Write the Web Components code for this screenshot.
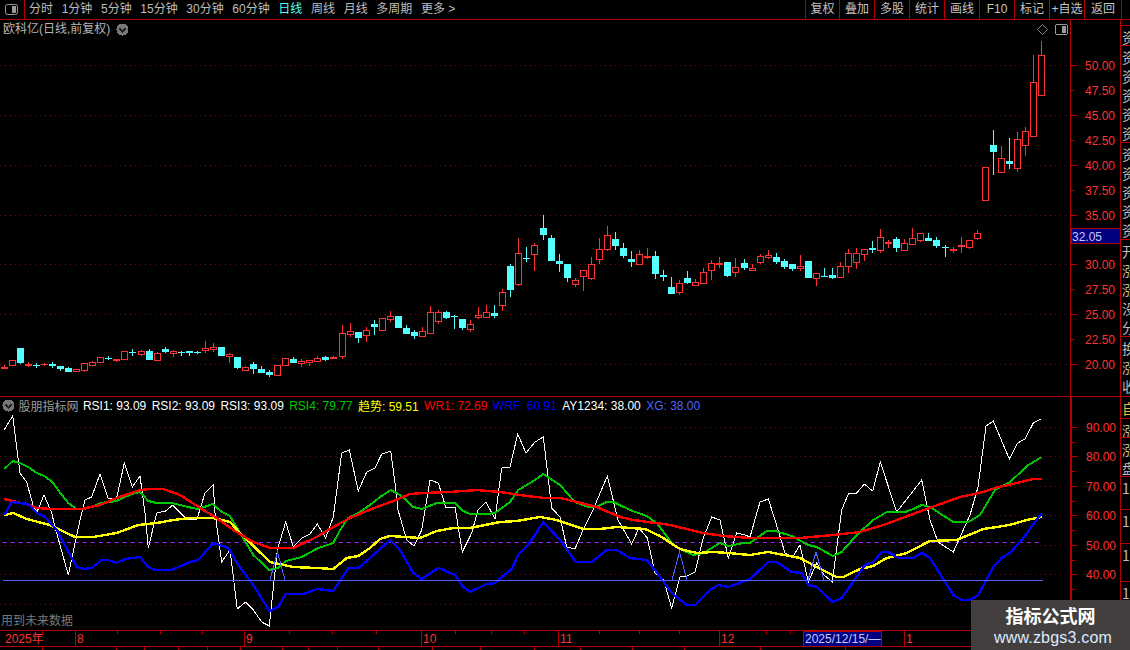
<!DOCTYPE html>
<html lang="zh">
<head>
<meta charset="utf-8">
<title>欧科亿</title>
<style>
html, body { margin: 0; height: 100%; background: #000; overflow: hidden; }
body { font: 12px "Liberation Sans", "Noto Sans CJK SC", sans-serif; color: #c0c0c0; }
</style>
</head>
<body>
<tdx-terminal>
  <tool-bar slot="toolbar">
    <tool-tab>分时</tool-tab><tool-tab>1分钟</tool-tab><tool-tab>5分钟</tool-tab><tool-tab>15分钟</tool-tab>
    <tool-tab>30分钟</tool-tab><tool-tab>60分钟</tool-tab><tool-tab active>日线</tool-tab><tool-tab>周线</tool-tab>
    <tool-tab>月线</tool-tab><tool-tab>多周期</tool-tab><tool-tab>更多 &gt;</tool-tab>
    <tool-button slot="right">复权</tool-button><tool-button slot="right">叠加</tool-button><tool-button slot="right">多股</tool-button>
    <tool-button slot="right">统计</tool-button><tool-button slot="right">画线</tool-button><tool-button slot="right">F10</tool-button>
    <tool-button slot="right">标记</tool-button><tool-button slot="right">+自选</tool-button><tool-button slot="right" wide>返回</tool-button>
  </tool-bar>

  <candle-panel slot="main">欧科亿(日线,前复权)</candle-panel>
  <price-axis slot="main-axis"></price-axis>

  <indicator-panel slot="sub">
    <span slot="title">股朋指标网</span>
    <legend-item color="#fff">RSI1: 93.09</legend-item>
    <legend-item color="#fff">RSI2: 93.09</legend-item>
    <legend-item color="#fff">RSI3: 93.09</legend-item>
    <legend-item color="#00c800">RSI4: 79.77</legend-item>
    <legend-item color="#ff0">趋势: 59.51</legend-item>
    <legend-item color="#f00">WR1: 72.69</legend-item>
    <legend-item color="#00f">WRF: 60.91</legend-item>
    <legend-item color="#fff">AY1234: 38.00</legend-item>
    <legend-item color="#4b64ff">XG: 38.00</legend-item>
  </indicator-panel>
  <value-axis slot="sub-axis"></value-axis>
  <time-axis slot="time"></time-axis>

  <side-strip slot="side">
    <side-tab h="6"></side-tab>
    <side-tab h="20">资</side-tab>
    <side-tab h="97">资资资资资</side-tab>
    <side-tab h="97">资资资资资</side-tab>
    <side-tab h="97">开涨涨没分</side-tab>
    <side-tab h="60">换涨收</side-tab>
    <side-tab h="22" color="#e0c040">自</side-tab>
    <side-tab h="19">涨</side-tab>
    <side-tab h="39">涨盘</side-tab>
    <side-tab h="33">1</side-tab>
    <side-tab h="34">1</side-tab>
    <side-tab h="38">1</side-tab>
    <side-tab h="40">1</side-tab>
  </side-strip>

  <water-mark slot="overlay"></water-mark>
</tdx-terminal>

<script>
const RED = "#b40000";
const DOT = "#800000";
const AXIS_TEXT = "#ff3232";

// 右上と左上の小さいアイコン
const panelIcon = `<svg width="13" height="11" viewBox="0 0 13 11"><rect x=".5" y=".5" width="12" height="10" rx="2" fill="none" stroke="#9a9a9a"/><rect x="7" y="2" width="4" height="7" fill="#9a9a9a"/></svg>`;
const chevron = `<svg width="13" height="13" viewBox="0 0 13 13"><circle cx="6.5" cy="6.5" r="6" fill="#777"/><path d="M3.5 5.5l3 3 3-3" fill="none" stroke="#222" stroke-width="1.5"/></svg>`;

class TdxTerminal extends HTMLElement {
  constructor() {
    super();
    this.attachShadow({ mode: "open" });
    this.shadowRoot.innerHTML = `
      <style>
      :host { display: grid; position: relative; width: 1130px; height: 650px; overflow: hidden;
        grid-template-columns: 1070px 51px 9px; grid-template-rows: 20px 377px 234px 19px; }
      .top { grid-column: 1 / 4; }
      .time { grid-column: 1 / 3; }
      .side { grid-column: 3; grid-row: 2 / 5; }
      </style>
      <div class="top"><slot name="toolbar"></slot></div>
      <slot name="main"></slot><slot name="main-axis"></slot>
      <div class="side"><slot name="side"></slot></div>
      <slot name="sub"></slot><slot name="sub-axis"></slot>
      <div class="time"><slot name="time"></slot></div>
      <slot name="overlay"></slot>`;
  }
}

class ToolBar extends HTMLElement {
  constructor() {
    super();
    this.attachShadow({ mode: "open" });
    this.shadowRoot.innerHTML = `
      <style>
      :host { display: flex; height: 20px; box-sizing: border-box; border-bottom: 1px solid ${RED}; }
      .icon { width: 23px; border-right: 1px solid ${RED}; display: flex; align-items: center; justify-content: center; padding-right: 1px; box-sizing: content-box; }
      .tabs { display: flex; gap: 8.65px; padding-left: 4px; align-items: center; flex: 1; }
      .right { display: flex; border-right: 1px solid ${RED}; margin-right: 8px; }
      </style>
      <div class="icon">${panelIcon}</div>
      <div class="tabs"><slot></slot></div>
      <div class="right"><slot name="right"></slot></div>`;
  }
}

class ToolTab extends HTMLElement {
  constructor() {
    super();
    this.attachShadow({ mode: "open" });
    this.shadowRoot.innerHTML = `
      <style>
      :host { display: block; color: #bdbdbd; line-height: 19px; white-space: nowrap; }
      :host([active]) { color: #54ffff; }
      </style><slot></slot>`;
  }
}

class ToolButton extends HTMLElement {
  constructor() {
    super();
    this.attachShadow({ mode: "open" });
    this.shadowRoot.innerHTML = `
      <style>
      :host { display: block; width: 35px; box-sizing: border-box; border-left: 1px solid ${RED}; color: #c4c4c4;
        line-height: 19px; text-align: center; white-space: nowrap; }
      :host(:first-of-type) { width: 34px; }
      :host([wide]) { width: 37px; }
      </style><slot></slot>`;
  }
}

// チャート共通: ページ座標をそのまま viewBox に使う
function svgBox(x, y, w, h, inner) {
  return `<svg xmlns="http://www.w3.org/2000/svg" width="${w}" height="${h}" viewBox="${x} ${y} ${w} ${h}" style="display:block">${inner}</svg>`;
}
function dotted(y, x1 = 0, x2 = 1068) {
  return `<line x1="${x1}" x2="${x2}" y1="${y + 0.5}" y2="${y + 0.5}" stroke="${DOT}" stroke-dasharray="1 4"/>`;
}

// 足データ: [種類, ひげ上, 実体上, 実体下, ひげ下] 値はズーム画像の座標 (r=中抜き赤 R=塗り赤 c=水色)
const CANDLES = [
  [300, [["R",195,201,206,207],["r",181,181,197,197],["c",144,144,189,192],["R",186,192,197,202],["c",190,194,197,204],["R",188,191,195,198],
    ["c",186,192,198,204],["c",198,198,207,213],["c",201,204,216,216],["r",208,208,215,215],["r",190,190,212,215],["r",183,187,197,197],
    ["r",172,172,188,188],["c",168,173,176,180],["R",178,178,182,186],["r",154,154,179,179],["c",148,156,159,168],["r",150,154,164,167],
    ["c",148,153,180,180],["r",157,160,182,182],["c",141,147,156,159],["r",151,154,161,171],["c",153,155,158,168],["c",153,153,159,168],
    ["c",153,156,158,162],["r",123,145,152,159],["r",129,142,149,156],["c",141,141,168,168],["r",160,163,170,190],["c",171,171,204,207],
    ["r",198,202,212,212],["c",186,193,207,222],["c",198,207,219,219],["c",210,216,225,231],["r",196,196,227,227],["r",175,175,197,197],
    ["c",171,177,189,189],["r",178,184,193,201],["r",181,181,188,198],["r",168,175,185,185],["c",168,171,180,183],["r",168,172,178,178]]],
  [200, [["r",375,400,470,477],["r",369,394,404,411],["c",396,396,414,429],["r",381,391,407,426],["c",360,372,381,405],["r",355,355,392,392],
    ["r",333,349,359,365],["c",348,348,384,384],["c",375,384,402,402],["c",390,396,408,417],["r",381,394,410,410],["r",318,337,401,401],
    ["r",330,337,365,372],["c",333,336,354,357],["c",345,348,351,387],["c",357,357,384,390],["r",360,373,389,396],["r",321,346,353,357],
    ["r",315,337,353,353],["c",315,339,348,354],["r",267,277,317,333],["c",192,198,270,291],["r",114,160,254,258],["c",141,174,177,186],
    ["r",129,136,164,213],["c",45,84,105,120],["c",105,114,183,183],["c",162,183,192,216],["c",192,192,234,246],["r",234,241,254,261],
    ["r",211,211,230,273],["r",171,193,236,240],["r",114,148,179,192],["r",78,106,149,153],["c",96,117,138,150],["c",129,144,168,174],
    ["c",153,177,186,201],["r",150,163,194,194],["R",144,168,174,177],["c",153,168,222,237],["c",210,225,231,243],["c",231,261,282,282],
    ["r",240,250,278,285],["c",213,234,249,252]]],
  [200, [["r",237,247,257,257],["r",205,217,251,251],["r",181,190,212,240],["r",171,190,196,204],["c",186,186,228,231],["r",174,202,220,231],
    ["c",178,189,204,210],["r",192,205,212,212],["r",162,169,188,191],["r",150,166,174,177],["c",159,171,186,192],["c",177,183,201,207],
    ["c",192,192,207,213],["r",165,199,206,213],["c",183,183,234,234],["r",220,220,236,258],["c",204,228,231,231],["c",204,225,234,237],
    ["r",186,199,234,234],["r",147,160,200,219],["r",144,160,189,207],["r",148,148,164,183],["c",123,144,150,159],["r",87,112,153,159],
    ["R",120,125,132,144],["c",111,117,144,156],["r",117,130,152,152],["r",84,115,134,134],["r",100,100,123,126],["c",99,114,123,123],
    ["c",111,120,138,144],["c",135,141,144,171],["r",141,147,151,159],["r",111,135,138,159],["r",121,121,144,147],["r",90,100,117,120]]],
  [30, [["r",412,412,512,512],["c",300,345,366,435],["r",348,385,428,428],["c",324,393,402,417],["r",306,328,416,426],["r",292,304,347,378],
    ["r",75,157,320,320],["r",33,76,197,197]]],
];

function candlesSvg() {
  let i = 0, out = "";
  for (const [base, list] of CANDLES) {
    for (const [t, wt, top, bot, wb] of list) {
      const cx = Math.floor(4.33 + 8.04 * i++);
      const y = (v) => Math.round(base + v / 3);
      const col = t === "c" ? "#54ffff" : "#ff3232";
      out += `<line x1="${cx + 0.5}" x2="${cx + 0.5}" y1="${y(wt)}" y2="${y(wb)}" stroke="${col}"/>`;
      const h = Math.max(y(bot) - y(top), 1);
      if (t === "r") {
        out += `<rect x="${cx - 2.5}" y="${y(top) + 0.5}" width="6" height="${h - 1 > 0 ? h - 1 : 1}" fill="#000" stroke="${col}"/>`;
      } else {
        out += `<rect x="${cx - 3}" y="${y(top)}" width="7" height="${h}" fill="${col}"/>`;
      }
    }
  }
  return out;
}

class CandlePanel extends HTMLElement {
  constructor() {
    super();
    this.attachShadow({ mode: "open" });
    const grid = [65, 115, 165, 215, 264, 314, 364].map((y) => dotted(y)).join("");
    const diamond = `<path d="M1042.5 24.5l5 5-5 5-5-5z" fill="none" stroke="#808080" shape-rendering="auto"/>`;
    this.shadowRoot.innerHTML = `
      <style>
      :host { display: block; position: relative; height: 377px; box-sizing: border-box; border-bottom: 1px solid ${RED}; }
      .title { position: absolute; left: 3px; top: 1px; display: flex; align-items: center; gap: 6px; line-height: 17px; color: #b4b4b4; }
      .pin { position: absolute; left: 1055px; top: 4px; line-height: 0; }
      svg { shape-rendering: crispEdges; }
      </style>
      ${svgBox(0, 20, 1070, 376, grid + candlesSvg() + diamond)}
      <div class="title"><slot></slot>${chevron}</div>
      <div class="pin">${panelIcon}</div>`;
  }
}

class PriceAxis extends HTMLElement {
  constructor() {
    super();
    this.attachShadow({ mode: "open" });
    const rows = [[65,"50.00"],[90,"47.50"],[115,"45.00"],[140,"42.50"],[165,"40.00"],[190,"37.50"],[215,"35.00"],[264,"30.00"],[289,"27.50"],[314,"25.00"],[339,"22.50"],[364,"20.00"]];
    let s = "";
    for (const [y, v] of rows) {
      const major = Math.round(parseFloat(v) * 100) % 500 === 0;
      s += `<line x1="1071" x2="${major ? 1077 : 1074}" y1="${y + 0.5}" y2="${y + 0.5}" stroke="${RED}"/>`;
      s += `<text x="1085" y="${y + 5}" fill="${AXIS_TEXT}">${v}</text>`;
    }
    s += `<rect x="1071.5" y="228.5" width="49" height="15" fill="#000080" stroke="${RED}"/>`;
    s += `<text x="1072" y="241" fill="#c8c8ff">32.05</text>`;
    this.shadowRoot.innerHTML = `
      <style>
      :host { display: block; height: 377px; box-sizing: border-box; border-left: 1px solid ${RED}; border-right: 1px solid ${RED}; border-bottom: 1px solid ${RED}; overflow: hidden; }
      svg { shape-rendering: crispEdges; font: 12px "Liberation Sans", sans-serif; }
      </style>${svgBox(1071, 20, 49, 376, s)}`;
  }
}

const LINE_WHITE = "4,430 12.7,416 20,473 26.7,482 33,505 37,512 44,495 51.7,513 55,527 68.3,575 80,520 85,500 91.7,497 100,474 108,498 116.7,498 124.3,463 132.3,487 140,476 145,513 148.3,548 156.7,513 165.7,511 172.7,505 186.7,519 196.7,520 205,493 213.3,485 215,513 221.7,562 230,550 237.3,609 245.7,602 253.3,610 261.7,622 269.3,626 277.3,550 285.7,522 293.3,547 301.7,538 310,534 317.3,524 325.7,538 333.3,517 341.7,453 349.3,450 358.3,491 366.7,472 375,468 381.7,454 390.7,451 395,483 398,510 406.7,540 414,546 421.7,530 430,480 438.3,483 446,508 455,507 462.3,552 471.7,533 478,510 486,502 495,519 501.7,468 510,467 517.7,434 526,453 535,442 543.3,437 551.7,508 560,517 566.7,547 575,549 583,530 591.7,513 607.3,476 618,520 631.7,544 639,528 647.3,538 655,573 663.3,579 671.7,608 680,577 687.3,576 695,572 703.3,538 711.7,517 720,520 728.3,558 736.7,533 745,535 750,537 760,502 768.3,499 775,520 785,553 792.7,557 800,545 808.3,582 816.7,563 824,575 832.3,582 841.7,510 848.3,494 856.7,493 864.3,484 872.7,491 880.3,462 896.7,512 921.7,480 930,520 938,542 953.3,552 970,515 978,487 986,426 993.3,421 1009.3,459 1017.7,443 1025,439 1033.3,423 1041,419";
const LINE_GREEN = "4.3,469 12.7,461 20,463 28.3,467 36.7,473 44.3,476 52.3,482 60.3,493 68.3,503 76.3,509 84.3,509 92.3,507 100,503 116.7,501 125,497 132.3,494 140,492 148.3,501 156.7,503 172.3,503 188.3,507 196.7,509 204.3,507 212.7,504 221.7,512 230,516 240,533 253.3,555 269.3,570 278.3,568 285.7,561 301.7,557 318.3,548 333.3,543 340,530 348.3,518 358.3,513 370,505 380,497 390.7,490 398.3,494 404.3,498 413.3,507 421.7,509 436.7,503 455,503 463.3,511 470,514 486.7,514 495,513 510,502 518.3,490 535,480 543.3,474 560,485 575,502 588.3,507 596.7,507 606.7,502 613.3,502 630,510 646.7,516 656.7,523 671.7,543 680,549 693.3,555 703.3,553 720,543 728.3,546 743.3,543 750,543 766.7,531 775,531 791.7,536 808.3,545 816.7,547 832.7,556 841.7,552 856.7,535 873.3,520 886.7,512 905,512 913.3,509 921.7,505 930,507 953.3,522 968.3,522 980,515 995,490 1010,482 1028.3,465 1041.7,457";
const LINE_YELLOW = "4.3,515 13.3,513 26.7,519 50,525 75,537 93.3,537 116.7,533 138.3,525 156.7,523 173.3,520 190,518 213.3,518 230,522 240,533 270,562 293.3,567 316.7,568 333.3,569 346.7,558 358.3,556 370,548 380,539 390,536 420,538 436.7,531 453.3,528 470,528 500,522 516.7,521 540,517 556.7,520 583.3,529 600,529 616.7,527 645,529 660,536 680,549 696.7,553 713.3,552 728.3,553 750,555 768.3,552 800,558 816.7,567 836.7,577 843.3,577 860,569 873.3,566 886.7,558 906.7,553 930,541 956.7,540 983.3,529 1003.3,526 1013.3,524 1026.7,520 1041.7,517";
const LINE_RED = "4.3,499 16.7,502 30,505 36.7,508 51.7,509 81.7,509 100,505 116.7,498 140,490 150,489 163.3,489 180,495 203.3,510 216.7,518 233.3,530 253.3,542 270,548 293.3,548 316.7,537 333.3,527 350,518 366.7,511 376.7,507 393.3,501 410,494 423.3,493 450,492 476.7,490 500,492 526.7,496 545,498 560,498 573.3,501 596.7,507 620,517 633.3,520 670,525 703.3,533 723.3,536 750,538 800,538 833.3,535 860,532 883.3,525 926.7,509 960,497 983.3,492 995,488 1016.7,483 1033.3,479 1041.7,479";
const LINE_BLUE = "4.3,515 11.7,502 28.3,504 36.7,513 45,517 56.7,530 76.7,567 83.3,569 91.7,568 101.7,560 108.3,560 116.7,563 125,559 140,557 148.3,567 155,570 171.7,570 190,562 198.3,560 213.3,543 228.3,548 238.3,565 253.3,585 269.3,611 278.3,607 285.7,594 303.3,594 316.7,589 333.3,591 348.3,568 358.3,568 370,558 390,540 400,550 413.3,573 421.7,579 438.3,568 455,575 463.3,587 470,592 486.7,584 495,583 511.7,569 518.3,555 528.3,545 543.3,522 560,540 575.7,562 591.7,562 606.7,550 616.7,550 630,558 646.7,560 655,570 671.7,593 686.7,605 695,605 710,590 718.3,585 728.3,587 750,579 768.3,562 776.7,562 791.7,572 801.7,573 808.3,585 816.7,587 832.7,602 841.7,598 865,565 873.3,562 881.7,552 888.3,552 898.3,558 913.3,558 921.7,553 930,558 953.3,595 961.7,600 970,600 978.3,595 993.3,567 1001.7,558 1010,553 1023.3,538 1041.7,513";

const poly = (pts, col, w) => `<polyline points="${pts}" fill="none" stroke="${col}" stroke-width="${w}"/>`;

class IndicatorPanel extends HTMLElement {
  constructor() {
    super();
    this.attachShadow({ mode: "open" });
    const grid = [427, 456, 486, 515, 545, 574, 604].map((y) => dotted(y)).join("");
    const guide = `<line x1="3" x2="1043" y1="542.5" y2="542.5" stroke="#a020f0" stroke-dasharray="4 4"/>`;
    const xg = "#4b64ff";
    const spikes = [[270, 285], [672, 687], [808, 824]].map(([a, b]) => poly(`${a},580 ${(a + b) / 2},552 ${b},580`, xg, 1)).join("");
    const flat = [[270, 285], [680, 704], [808, 832]].map(([a, b]) => `<line x1="${a}" x2="${b}" y1="580.5" y2="580.5" stroke="#fff"/>`).join("");
    const body = grid + guide + poly(LINE_WHITE, "#fff", 1) + flat +
      poly(LINE_GREEN, "#00c800", 2) + poly(LINE_YELLOW, "#ff0", 2.4) + poly(LINE_RED, "#f00", 2.4) + poly(LINE_BLUE, "#0000ff", 2.4) +
      spikes + `<line x1="3" x2="1043" y1="580.5" y2="580.5" stroke="${xg}"/>`;
    this.shadowRoot.innerHTML = `
      <style>
      :host { display: block; position: relative; height: 234px; box-sizing: border-box; border-bottom: 1px solid ${RED}; overflow: hidden; }
      .legend { position: absolute; left: 2px; top: 0; display: flex; align-items: center; gap: 5.4px; height: 17px; white-space: nowrap; }
      .name { display: flex; gap: 3.5px; align-items: center; color: #9c9c9c; margin-right: -1px; }
      .note { position: absolute; left: 1px; top: 217px; color: #7a7a7a; line-height: 15px; }
      svg { shape-rendering: crispEdges; }
      </style>
      ${svgBox(0, 397, 1070, 233, body)}
      <div class="legend"><div class="name">${chevron}<slot name="title"></slot></div><slot></slot></div>
      <div class="note">用到未来数据</div>`;
  }
}

class LegendItem extends HTMLElement {
  constructor() {
    super();
    this.attachShadow({ mode: "open" });
    this.shadowRoot.innerHTML = `<style>:host { display: block; color: ${this.getAttribute("color")}; }</style><slot></slot>`;
  }
}

class ValueAxis extends HTMLElement {
  constructor() {
    super();
    this.attachShadow({ mode: "open" });
    const rows = [[427,"90.00"],[456,"80.00"],[486,"70.00"],[515,"60.00"],[545,"50.00"],[574,"40.00"],[604,""]];
    let s = "";
    for (const [y, v] of rows) {
      s += `<line x1="1072" x2="1078" y1="${y + 0.5}" y2="${y + 0.5}" stroke="${RED}"/>`;
      s += `<line x1="1072" x2="1075" y1="${y + 15.5}" y2="${y + 15.5}" stroke="${RED}"/>`;
      if (v) s += `<text x="1086" y="${y + 5}" fill="${AXIS_TEXT}">${v}</text>`;
    }
    this.shadowRoot.innerHTML = `
      <style>
      :host { display: block; height: 234px; box-sizing: border-box; border-left: 2px solid ${RED}; border-right: 1px solid ${RED}; border-bottom: 1px solid ${RED}; overflow: hidden; }
      svg { shape-rendering: crispEdges; font: 12px "Liberation Sans", sans-serif; }
      </style>${svgBox(1072, 397, 48, 233, s)}`;
  }
}

class TimeAxis extends HTMLElement {
  constructor() {
    super();
    this.attachShadow({ mode: "open" });
    const months = [[75, "8"], [244, "9"], [421, "10"], [558, "11"], [719, "12"], [904, "1"]];
    const small = [42, 117, 160, 202, 289, 332, 376, 455, 491, 524, 599, 639, 679, 766, 790];
    const lower = [42, 116, 144, 178, 207, 240, 282, 308, 337, 378, 432, 480, 534, 580, 632, 684, 760, 845];
    let s = "";
    for (const [x, t] of months) {
      s += `<line x1="${x + 0.5}" x2="${x + 0.5}" y1="631" y2="646" stroke="${RED}"/>`;
      s += `<text x="${x + 2}" y="643" fill="${AXIS_TEXT}">${t}</text>`;
    }
    for (const x of small) s += `<line x1="${x + 0.5}" x2="${x + 0.5}" y1="631" y2="634" stroke="${RED}"/>`;
    for (const x of lower) s += `<line x1="${x + 0.5}" x2="${x + 0.5}" y1="647" y2="650" stroke="${RED}"/>`;
    s += `<text x="5" y="643" fill="${AXIS_TEXT}" style="font-family:'Liberation Sans','Noto Sans CJK SC',sans-serif">2025年</text>`;
    s += `<rect x="803.5" y="631" width="78" height="15" fill="#000080" stroke="${RED}" stroke-width="1"/>`;
    s += `<text x="805" y="643" fill="#c8c8ff">2025/12/15/—</text>`;
    s += `<line x1="0" x2="1121" y1="646.5" y2="646.5" stroke="${RED}"/>`;
    this.shadowRoot.innerHTML = `
      <style>
      :host { display: block; height: 19px; overflow: hidden; }
      svg { shape-rendering: crispEdges; font: 12px "Liberation Sans", sans-serif; }
      </style>${svgBox(0, 631, 1121, 19, s)}`;
  }
}

class SideStrip extends HTMLElement {
  constructor() {
    super();
    this.attachShadow({ mode: "open" });
    this.shadowRoot.innerHTML = `
      <style>:host { display: flex; flex-direction: column; width: 9px; height: 630px; overflow: hidden; }</style><slot></slot>`;
  }
}

class SideTab extends HTMLElement {
  constructor() {
    super();
    this.attachShadow({ mode: "open" });
    const h = this.getAttribute("h");
    const color = this.getAttribute("color") || "#bcbcbc";
    this.shadowRoot.innerHTML = `
      <style>
      :host { display: block; flex: none; height: ${h}px; box-sizing: border-box; border-bottom: 1px solid ${RED}; overflow: hidden; }
      div { width: 14px; margin-left: 1px; padding-top: 2px; color: ${color}; font: 14px/19px "Noto Sans CJK SC", sans-serif; word-break: break-all; }
      </style><div><slot></slot></div>`;
  }
}

class WaterMark extends HTMLElement {
  constructor() {
    super();
    this.attachShadow({ mode: "open" });
    this.shadowRoot.innerHTML = `
      <style>
      :host { position: absolute; right: 0; bottom: 0; width: 159px; height: 50px; background: #433f3f; display: flex; flex-direction: column; align-items: center; }
      .cn { color: #fff; font: bold 18px/24px "Noto Sans CJK SC", sans-serif; margin: 3px 0 0 0; }
      .en { color: #dcebff; font: 16px/19px "Liberation Sans", sans-serif; margin: 1px 0 0 5px; letter-spacing: .2px; }
      </style>
      <div class="cn">指标公式网</div><div class="en">www.zbgs3.com</div>`;
  }
}

customElements.define("tdx-terminal", TdxTerminal);
customElements.define("tool-bar", ToolBar);
customElements.define("tool-tab", ToolTab);
customElements.define("tool-button", ToolButton);
customElements.define("candle-panel", CandlePanel);
customElements.define("price-axis", PriceAxis);
customElements.define("indicator-panel", IndicatorPanel);
customElements.define("legend-item", LegendItem);
customElements.define("value-axis", ValueAxis);
customElements.define("time-axis", TimeAxis);
customElements.define("side-strip", SideStrip);
customElements.define("side-tab", SideTab);
customElements.define("water-mark", WaterMark);
</script>
</body>
</html>
